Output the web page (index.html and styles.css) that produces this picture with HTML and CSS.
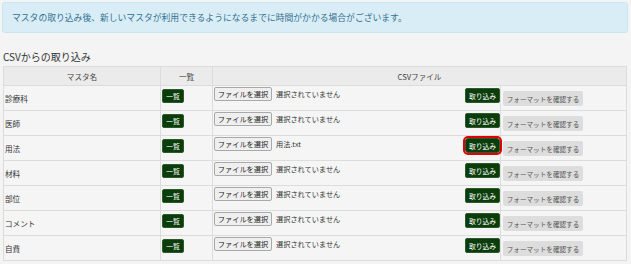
FILE: index.html
```html
<!DOCTYPE html>
<html lang="ja">
<head>
  <meta charset="UTF-8" />
  <title>マスタ取り込み</title>
  <link rel="stylesheet" href="styles.css">
</head>
<body>
  <div class="alert">マスタの取り込み後、新しいマスタが利用できるようになるまでに時間がかかる場合がございます。</div>

  <h4 class="title">CSVからの取り込み</h4>

  <table class="master-table">
    <colgroup>
      <col class="c-name">
      <col class="c-list">
      <col class="c-file">
      <col class="c-format">
    </colgroup>
    <thead>
      <tr>
        <th>マスタ名</th>
        <th>一覧</th>
        <th colspan="2">CSVファイル</th>
      </tr>
    </thead>
    <tbody id="rows"></tbody>
  </table>

  <script>
    const masters = [
      { name: "診療科", file: "" },
      { name: "医師", file: "" },
      { name: "用法", file: "用法.txt", focus: true },
      { name: "材料", file: "" },
      { name: "部位", file: "" },
      { name: "コメント", file: "" },
      { name: "自費", file: "" }
    ];

    document.getElementById("rows").innerHTML = masters.map(m => `
      <tr>
        <td class="name">${m.name}</td>
        <td><button class="btn-green btn-list">一覧</button></td>
        <td>
          <span class="file-btn">ファイルを選択</span><span class="file-name">${m.file || "選択されていません"}</span>
          <button class="btn-green btn-import${m.focus ? " focused" : ""}">取り込み</button>
        </td>
        <td><button class="btn-format">フォーマットを確認する</button></td>
      </tr>`).join('');
  </script>
</body>
</html>
```

FILE: styles.css
```css
body {
  margin: 0;
  padding: 2px;
  background: #f4f4f4;
  font-family: "Noto Sans CJK JP", "Noto Sans", sans-serif;
  color: #333;
}

.alert {
  height: 29px;
  line-height: 29px;
  padding: 0 9px;
  background: #d9edf7;
  border: 1px solid #c8e6f2;
  border-radius: 3px;
  color: #31708f;
  font-size: 8.8px;
  width: 606px;
}

.title {
  margin: 15px 0 0 1px;
  height: 18px;
  line-height: 18px;
  font-size: 10px;
  font-weight: normal;
  color: #333;
}

.master-table {
  margin-left: 1px;
  width: 623px;
  table-layout: fixed;
  border-collapse: collapse;
  background: #f5f5f5;
  font-size: 7.6px;
}

.c-name { width: 157px; }
.c-list { width: 52px; }
.c-file { width: 288px; }
.c-format { width: 126px; }

.master-table th,
.master-table td {
  border: 1px solid #dcdcdc;
  padding: 0;
}

.master-table th {
  height: 18px;
  background: #ebebeb;
  font-weight: normal;
  color: #444;
}

.master-table td {
  height: 24px;
  vertical-align: top;
}

.master-table td.name {
  vertical-align: middle;
  padding-left: 1px;
}

button {
  font-family: inherit;
  cursor: pointer;
}

.btn-green {
  display: block;
  background: #0b3d0b;
  border: 1px solid #2c5a2c;
  border-radius: 2px;
  color: #fff;
  font-size: 6.8px;
  padding: 0;
}

.btn-list {
  width: 22px;
  height: 14px;
  margin: 3px 0 0 1px;
}

.btn-import {
  float: right;
  width: 35px;
  height: 15px;
  margin: 2px 0 0 0;
}

.btn-import.focused {
  outline: 2px solid #e00000;
  outline-offset: 0;
  border-radius: 3px;
}

.file-btn {
  display: inline-block;
  margin: 1px 0 0 1px;
  width: 56px;
  height: 12px;
  line-height: 12px;
  text-align: center;
  background: #efefef;
  border: 1px solid #a9a9a9;
  border-radius: 2px;
  font-size: 7.2px;
  color: #222;
  vertical-align: top;
}

.file-name {
  display: inline-block;
  margin: 1px 0 0 4px;
  line-height: 14px;
  font-size: 7.2px;
  vertical-align: top;
}

.btn-format {
  display: block;
  width: 80px;
  height: 15px;
  margin: 5px 0 0 2px;
  background: #dddddd;
  border: none;
  border-radius: 2px;
  color: #555;
  font-size: 6.6px;
  padding: 0;
}
```
